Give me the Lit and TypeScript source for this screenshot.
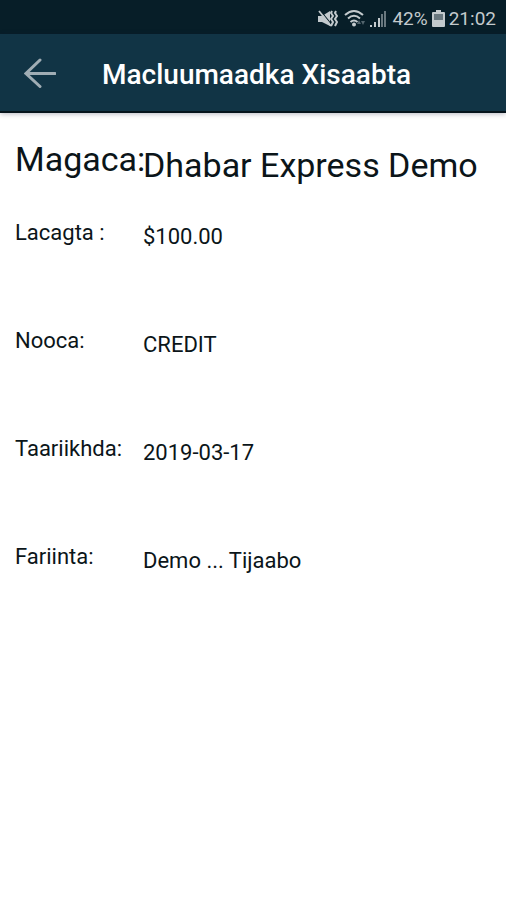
import { LitElement, html, css } from "lit";
import { customElement, property } from "lit/decorators.js";

interface Field {
  label: string;
  value: string;
}

@customElement("status-bar")
export class StatusBar extends LitElement {
  static styles = css`
    :host {
      display: flex;
      align-items: center;
      justify-content: flex-end;
      height: 34px;
      padding: 4px 10px 0 0;
      box-sizing: border-box;
      background: #071e28;
      color: #c3cacd;
      font-size: 19px;
      line-height: 24px;
    }
    svg {
      display: block;
      flex: none;
    }
    .mute {
      margin-right: 6px;
    }
    .wifi {
      margin-right: 4px;
    }
    .signal {
      margin-right: 6px;
    }
    .battery {
      margin: 0 4px;
    }
  `;

  render() {
    return html`
      <svg class="mute" width="20" height="20" viewBox="0 0 20 20" aria-hidden="true">
        <path d="M0 7h4l8-5v15l-8-4H0z" fill="#c3cacd" />
        <path d="M2 1l12 15" stroke="#071e28" stroke-width="1.200" />
        <path d="M1 2l12 15" stroke="#c3cacd" stroke-width="1.800" />
        <path d="M14 2l-1 2 2 3-2 3 2 3-2 4M18 2l-1 2 2 3-2 3 2 3-2 4" fill="none" stroke="#c3cacd" stroke-width="2" />
      </svg>
      <svg class="wifi" width="22" height="20" viewBox="0 0 22 20" aria-hidden="true">
        <g fill="none" stroke="#c3cacd" stroke-width="2">
          <path d="M1 6q9-8 18 0" />
          <path d="M4 9.500q6-5.500 12 0" />
          <path d="M6.500 13q3.500-3 7 0" />
        </g>
        <circle cx="10" cy="15.500" r="2" fill="#c3cacd" />
        <path d="M13 15l2-4 2 4zM17 12h4l-2 4z" fill="#53656d" />
      </svg>
      <svg class="signal" width="16" height="18" viewBox="0 0 16 18" aria-hidden="true">
        <path d="M0 15h2v2H0zM4 12h2v5H4zM8 8h2v9H8z" fill="#c3cacd" />
        <path d="M11 4h2v13h-2zM14 1h2v16h-2z" fill="#69787f" />
      </svg>
      <span>42%</span>
      <svg class="battery" width="13" height="18" viewBox="0 0 13 18" aria-hidden="true">
        <path d="M4 0h5v2h3q1 0 1 1v13q0 1-1 1H1q-1 0-1-1V3q0-1 1-1h3z" fill="#c3cacd" />
        <path d="M2 4h9v6H2z" fill="#69787f" />
      </svg>
      <span>21:02</span>
    `;
  }
}

@customElement("app-header")
export class AppHeader extends LitElement {
  @property() heading = "";

  static styles = css`
    :host {
      display: flex;
      align-items: center;
      gap: 46px;
      height: 79px;
      padding: 0 16px 0 16px;
      box-sizing: border-box;
      background: #113445;
      border-bottom: 2px solid #06141c;
      box-shadow: 0 1px 5px rgba(20, 20, 50, 0.3);
      color: #fff;
    }
    button {
      display: flex;
      align-items: center;
      justify-content: center;
      width: 40px;
      height: 40px;
      margin: 0;
      padding: 0 0 0 8px;
      border: 0;
      background: none;
      color: #a0adb4;
      cursor: pointer;
    }
    h1 {
      margin: 0;
      padding-top: 4px;
      font-size: 28px;
      line-height: 32px;
      font-weight: 500;
      white-space: nowrap;
    }
  `;

  render() {
    return html`
      <button type="button" aria-label="Back">
        <svg width="32" height="30" viewBox="0 0 32 30" fill="none" stroke="currentColor" stroke-width="3" stroke-linecap="round" aria-hidden="true">
          <path d="M16 2L2 15.500l14 13M2 15.500h29" />
        </svg>
      </button>
      <h1>${this.heading}</h1>
    `;
  }
}

@customElement("app-root")
export class AppRoot extends LitElement {
  private fields: Field[] = [
    { label: "Magaca:", value: "Dhabar Express Demo" },
    { label: "Lacagta :", value: "$100.00" },
    { label: "Nooca:", value: "CREDIT" },
    { label: "Taariikhda:", value: "2019-03-17" },
    { label: "Fariinta:", value: "Demo ... Tijaabo" },
  ];

  static styles = css`
    :host {
      display: block;
      min-height: 100vh;
      background: #fff;
      color: #0b1519;
      font-family: Roboto, "Liberation Sans", sans-serif;
    }
    dl {
      margin: 0;
      padding: 26px 15px 0;
    }
    .row {
      display: grid;
      grid-template-columns: 128px 1fr;
      min-height: 108px;
      font-size: 22px;
      line-height: 26px;
    }
    .row:first-child {
      min-height: 81px;
      font-size: 34px;
      line-height: 40px;
    }
    dt {
      white-space: nowrap;
    }
    dd {
      margin: 0;
      padding-top: 4px;
    }
    .row:first-child dd {
      padding-top: 6px;
    }
  `;

  render() {
    return html`
      <status-bar></status-bar>
      <app-header heading="Macluumaadka Xisaabta"></app-header>
      <main>
        <dl>
          ${this.fields.map(
            (f) => html`<div class="row"><dt>${f.label}</dt><dd>${f.value}</dd></div>`
          )}
        </dl>
      </main>
    `;
  }
}
